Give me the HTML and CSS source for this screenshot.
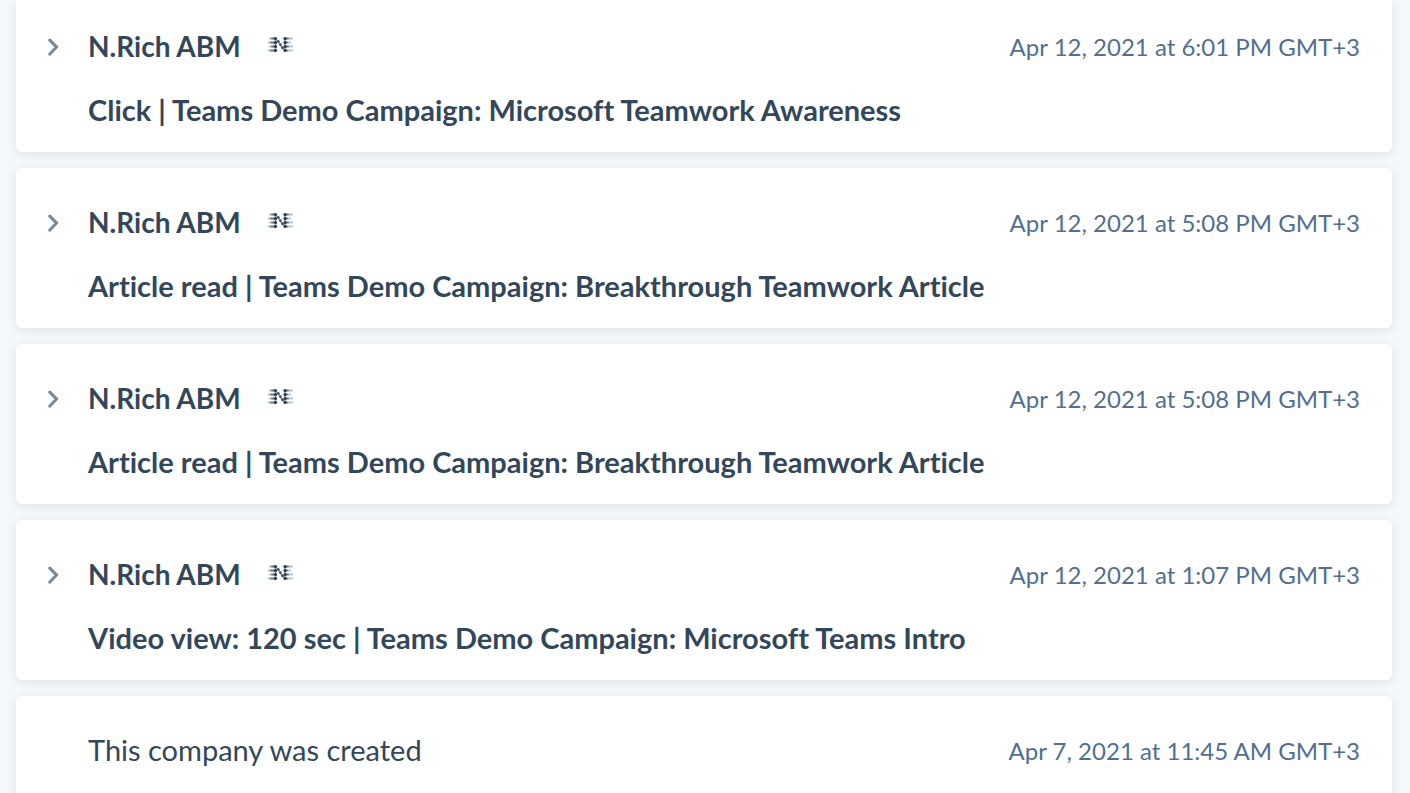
FILE: index.html
```html
<!DOCTYPE html>
<html lang="en">
<head>
    <meta charset="UTF-8">
    <meta name="viewport" content="width=device-width, initial-scale=1.0">
    <title>Company activity</title>
    <link rel="stylesheet" href="styles.css">
</head>
<body>
    <svg class="sprite" aria-hidden="true">
        <symbol id="chevron" viewBox="0 0 12 20">
            <path d="M1.8 4.2L8.6 11l-6.8 7" fill="none" stroke="#7a8c9f" stroke-width="3.2" stroke-linecap="round" stroke-linejoin="round"/>
        </symbol>
        <symbol id="nrich" viewBox="0 0 28 20">
            <g fill="none" stroke="#b4c2cf" stroke-width="2" stroke-linecap="round">
                <path d="M3 2.5h5M1.5 6.5h7M3 10.5h5M1.5 14.5h7M18 2.5h7M18 6.5h5M18 10.5h7M18 14.5h7"/>
            </g>
            <g fill="none" stroke="#6c8094" stroke-width="2" stroke-linecap="round">
                <path d="M5 2.5h3M4 6.5h4M5 10.5h3M4 14.5h4M18 2.5h3M18 6.5h2M18 10.5h3M18 14.5h2"/>
            </g>
            <path d="M8.5 2v13M18 2v13M10 4l7 10" fill="none" stroke="#8fa0b0" stroke-width="2"/>
            <g fill="#2b3c50">
                <circle cx="8.5" cy="2.5" r="1.6"/>
                <circle cx="8.5" cy="6.5" r="1.6"/>
                <circle cx="8.5" cy="10.5" r="1.6"/>
                <circle cx="8.5" cy="14.5" r="1.6"/>
                <circle cx="18" cy="2.5" r="1.6"/>
                <circle cx="18" cy="6.5" r="1.6"/>
                <circle cx="18" cy="10.5" r="1.6"/>
                <circle cx="18" cy="14.5" r="1.6"/>
                <circle cx="11.4" cy="5.4" r="1.2"/>
                <circle cx="13.4" cy="8.6" r="1.2"/>
                <circle cx="15.4" cy="11.8" r="1.2"/>
            </g>
        </symbol>
    </svg>

    <main class="timeline">
        <article class="card">
            <header class="card-header">
                <button class="toggle" aria-label="Expand"><svg><use href="#chevron"/></svg></button>
                <h2>N.Rich ABM</h2>
                <svg class="logo"><use href="#nrich"/></svg>
                <time>Apr 12, 2021 at 6:01 PM GMT+3</time>
            </header>
            <p class="event">Click | Teams Demo Campaign: Microsoft Teamwork Awareness</p>
        </article>

        <article class="card">
            <header class="card-header">
                <button class="toggle" aria-label="Expand"><svg><use href="#chevron"/></svg></button>
                <h2>N.Rich ABM</h2>
                <svg class="logo"><use href="#nrich"/></svg>
                <time>Apr 12, 2021 at 5:08 PM GMT+3</time>
            </header>
            <p class="event">Article read | Teams Demo Campaign: Breakthrough Teamwork Article</p>
        </article>

        <article class="card">
            <header class="card-header">
                <button class="toggle" aria-label="Expand"><svg><use href="#chevron"/></svg></button>
                <h2>N.Rich ABM</h2>
                <svg class="logo"><use href="#nrich"/></svg>
                <time>Apr 12, 2021 at 5:08 PM GMT+3</time>
            </header>
            <p class="event">Article read | Teams Demo Campaign: Breakthrough Teamwork Article</p>
        </article>

        <article class="card">
            <header class="card-header">
                <button class="toggle" aria-label="Expand"><svg><use href="#chevron"/></svg></button>
                <h2>N.Rich ABM</h2>
                <svg class="logo"><use href="#nrich"/></svg>
                <time>Apr 12, 2021 at 1:07 PM GMT+3</time>
            </header>
            <p class="event">Video view: 120 sec | Teams Demo Campaign: Microsoft Teams Intro</p>
        </article>

        <article class="card">
            <header class="card-header">
                <p class="created">This company was created</p>
                <time>Apr 7, 2021 at 11:45 AM GMT+3</time>
            </header>
        </article>
    </main>
</body>
</html>
```
FILE: styles.css
```css
body {
    margin: 0;
    background-color: #f5f8fa;
    color: #33475b;
    font-family: Lato, sans-serif;
    font-size: 29px;
    font-variant-ligatures: none;
}
.sprite {
    position: absolute;
    width: 0;
    height: 0;
}
.timeline {
    display: flex;
    flex-direction: column;
    gap: 16px;
    height: 100vh;
    padding: 0 18px 0 16px;
    box-sizing: border-box;
    overflow-y: auto;
    scrollbar-width: none;
}
.card {
    flex: none;
    padding: 36px 32px 24px;
    background-color: white;
    border-radius: 6px;
    box-shadow: 0 2px 10px rgba(45, 62, 80, 0.12);
}
.card:first-child {
    padding-top: 28px;
    border-top-left-radius: 0;
    border-top-right-radius: 0;
}
.card:last-child {
    padding-bottom: 36px;
}
.card-header {
    display: flex;
    align-items: center;
    line-height: 36px;
}
.toggle {
    width: 40px;
    height: 20px;
    padding: 0;
    border: none;
    background: none;
    text-align: left;
    cursor: pointer;
}
.toggle svg {
    display: block;
    width: 12px;
    height: 20px;
}
h2 {
    margin: 0;
    font-size: 28px;
    font-weight: bold;
}
.logo {
    width: 28px;
    height: 20px;
    margin-left: 26px;
}
time {
    margin-left: auto;
    color: #516f90;
    font-size: 24px;
    line-height: normal;
}
.event {
    margin: 28px 0 0 40px;
    line-height: 36px;
    font-weight: bold;
}
.created {
    margin: 0 0 0 40px;
}
```
